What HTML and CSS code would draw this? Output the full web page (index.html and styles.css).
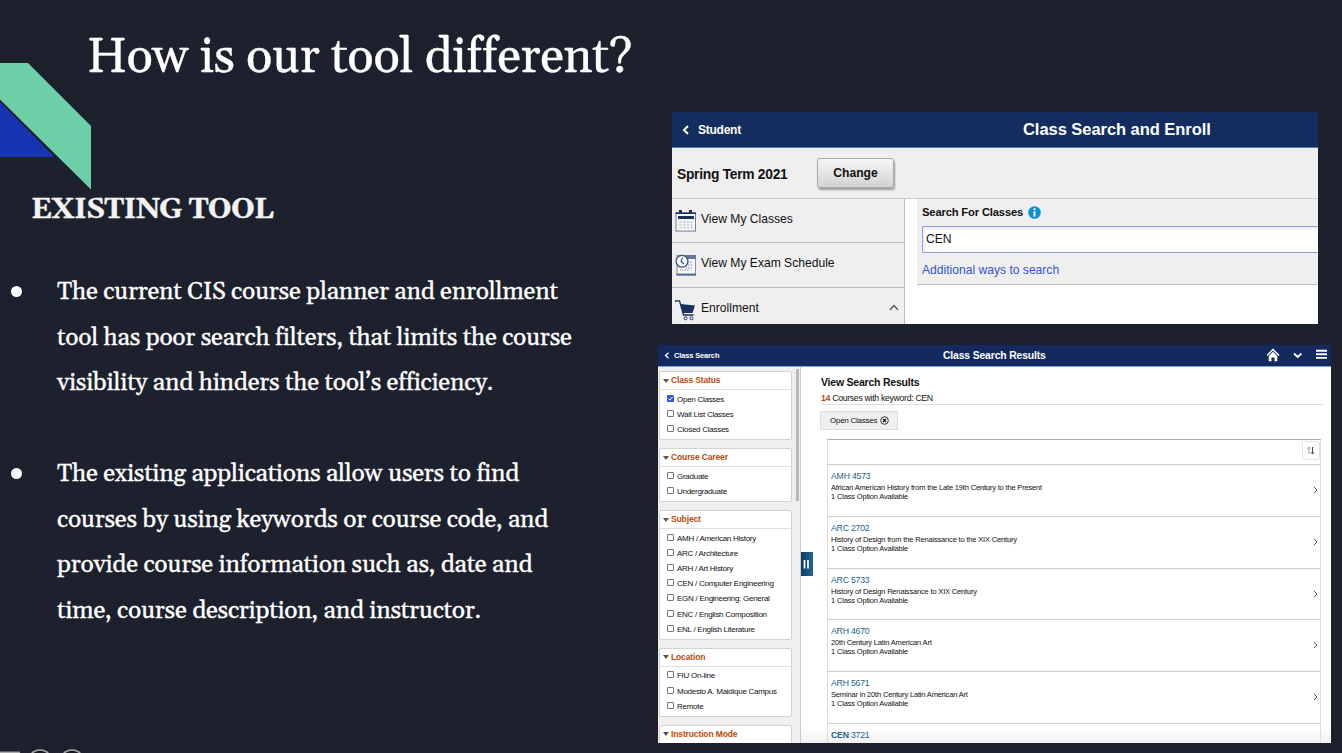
FILE: index.html
```html
<!DOCTYPE html>
<html lang="en">
<head>
<meta charset="utf-8">
<title>How is our tool different?</title>
<link rel="stylesheet" href="styles.css">
</head>
<body>
<main class="slide">
  <svg class="ribbon" width="92" height="128" viewBox="0 0 92 128">
    <path d="M0 0H28L91 63V126.500L0 36.500Z" fill="#6ccfa8"/>
    <path d="M0 39L54.500 94H0Z" fill="#1735b0"/>
  </svg>
  <svg class="controls" width="90" height="4" viewBox="0 0 90 4">
    <path d="M0 3.300H20" stroke="#aaa" stroke-width="1.500"/>
    <circle cx="40" cy="13" r="12" fill="#1b1b20" stroke="#aaa" stroke-width="1.600"/>
    <circle cx="72" cy="13" r="12" fill="#1b1b20" stroke="#aaa" stroke-width="1.600"/>
  </svg>

  <section class="copy">
    <h1>How is our tool different?</h1>
    <h2>EXISTING TOOL</h2>
    <ul class="points">
      <li><i class="dot"></i><p>The current CIS course planner and enrollment<br>tool has poor search filters, that limits the course<br>visibility and hinders the tool’s efficiency.</p></li>
      <li><i class="dot"></i><p>The existing applications allow users to find<br>courses by using keywords or course code, and<br>provide course information such as, date and<br>time, course description, and instructor.</p></li>
    </ul>
  </section>

  <section class="shots">
    <div class="enroll">
      <header class="enroll-head">
        <svg width="8" height="10" viewBox="0 0 8 10"><path d="M6 1L2 5L6 9" fill="none" stroke="#fff" stroke-width="2"/></svg>
        <span class="back">Student</span>
        <span class="enroll-title">Class Search and Enroll</span>
      </header>
      <div class="term"><span class="term-name">Spring Term 2021</span><span class="change">Change</span></div>
      <div class="enroll-body">
        <nav class="menu">
          <div class="menu-row">
            <svg width="22" height="22" viewBox="0 0 22 22"><rect x="1" y="3" width="19.500" height="18" fill="#fff" stroke="#6b7b98"/><path d="M.5 2.500H21V4H.5Z" fill="#17305d"/><path d="M3 6H19V9H3Z" fill="#17305d"/><path d="M5.500 0V3M15.500 0V3" stroke="#17305d" stroke-width="3"/><path d="M3 12H19M3 15H19M3 18H19M6 10V19M9.500 10V19M13 10V19M16.500 10V19" stroke="#c4c9d2" stroke-width=".8"/></svg>
            <span>View My Classes</span>
          </div>
          <div class="menu-row">
            <svg width="22" height="22" viewBox="0 0 22 22"><rect x="2" y="1.500" width="18.500" height="19.500" fill="#f6f7f9" stroke="#8090aa"/><path d="M10 1H21V5H10Z" fill="#607799"/><path d="M1.500 20.500H21" stroke="#4c658e" stroke-width="1.800"/><path d="M13 8H18M13 11H18M11 14H17M5 16H15" stroke="#71819b" stroke-dasharray="1.200 1.200"/><circle cx="7" cy="7.300" r="5.900" fill="#f8fafc" stroke="#39557f" stroke-width="1.300"/><path d="M7.500 3.500L6 7.500L9 10" fill="none" stroke="#39557f" stroke-width="1.100"/></svg>
            <span>View My Exam Schedule</span>
          </div>
          <div class="menu-row">
            <svg width="22" height="22" viewBox="0 0 22 22"><path d="M.7 3V1.800H4.500L8.500 16H18.500" fill="none" stroke="#17305d" stroke-width="1.300"/><path d="M5.500 5L20 6.500L17.500 14H8Z" fill="#17305d"/><circle cx="10.500" cy="19.300" r="1.500" fill="#fff" stroke="#17305d"/><circle cx="16.500" cy="19.300" r="1.500" fill="#fff" stroke="#17305d"/></svg>
            <span>Enrollment</span>
            <svg class="caret" width="10" height="7" viewBox="0 0 10 7"><path d="M1 6L5 1.500L9 6" fill="none" stroke="#555" stroke-width="1.300"/></svg>
          </div>
        </nav>
        <div class="search">
          <div class="search-label"><span>Search For Classes</span><svg width="13" height="13" viewBox="0 0 13 13"><circle cx="6.500" cy="6.500" r="6.300" fill="#0a8fd6"/><path d="M6.500 2.300V4M6.500 5.200V10.500" stroke="#fff" stroke-width="2"/></svg></div>
          <div class="field">CEN</div>
          <div class="ways">Additional ways to search</div>
        </div>
      </div>
    </div>

    <div class="results">
      <header class="res-head">
        <svg width="6" height="7" viewBox="0 0 6 7"><path d="M4.500 .8L1.500 3.500L4.500 6.200" fill="none" stroke="#fff" stroke-width="1.300"/></svg>
        <span class="res-back">Class Search</span>
        <span class="res-title">Class Search Results</span>
        <svg width="61" height="14" viewBox="0 0 61 14">
          <path d="M0 7.500L6 1.500L12 7.500" fill="none" stroke="#fff" stroke-width="1.500"/><path d="M1.700 8L6 3.800L10.300 8V13.200H7.500V9.500H4.500V13.200H1.700Z" fill="#fff"/>
          <path d="M27 5.500L30.700 9L34.400 5.500" fill="none" stroke="#fff" stroke-width="1.900"/>
          <path d="M49 2.700H60M49 6.300H60M49 9.900H60" stroke="#fff" stroke-width="1.900"/>
        </svg>
      </header>
      <div class="res-body">
        <aside class="filters">
          <div class="cards">
            <div class="card"><h3>Class Status</h3><div class="opts"><span class="opt on"><svg width="7" height="7" viewBox="0 0 7 7"><rect width="7" height="7" rx="1" fill="#2858e0"/><path d="M1.500 3.600L3 5.200L5.600 1.700" fill="none" stroke="#fff"/></svg>Open Classes</span><span class="opt">Wait List Classes</span><span class="opt">Closed Classes</span></div></div>
            <div class="card"><h3>Course Career</h3><div class="opts"><span class="opt">Graduate</span><span class="opt">Undergraduate</span></div></div>
            <div class="card"><h3>Subject</h3><div class="opts"><span class="opt">AMH / American History</span><span class="opt">ARC / Architecture</span><span class="opt">ARH / Art History</span><span class="opt">CEN / Computer Engineering</span><span class="opt">EGN / Engineering: General</span><span class="opt">ENC / English Composition</span><span class="opt">ENL / English Literature</span></div></div>
            <div class="card"><h3>Location</h3><div class="opts"><span class="opt">FIU On-line</span><span class="opt">Modesto A. Maidique Campus</span><span class="opt">Remote</span></div></div>
            <div class="card"><h3>Instruction Mode</h3><div class="opts"><span class="opt"></span></div></div>
          </div>
          <i class="scroll"></i>
        </aside>
        <svg class="handle" width="12" height="24" viewBox="0 0 12 24"><defs><linearGradient id="hg"><stop offset="0" stop-color="#0c3b5e"/><stop offset="1" stop-color="#1f6796"/></linearGradient></defs><path d="M0 0H12V24H0Z" fill="url(#hg)"/><path d="M3.500 8V16.500M7 8V16.500" stroke="#fff" stroke-width="1.700"/></svg>
        <div class="list-area">
          <h4>View Search Results</h4>
          <div class="count"><b>14</b> Courses with keyword: CEN</div>
          <div class="chip">Open Classes<svg width="9" height="9" viewBox="0 0 9 9"><circle cx="4.500" cy="4.500" r="3.800" fill="none" stroke="#222" stroke-width=".9"/><path d="M3 3L6 6M6 3L3 6" stroke="#111" stroke-width="1.100"/></svg></div>
          <div class="table">
            <div class="tools"><span class="sort"><svg width="10" height="9" viewBox="0 0 10 9"><path d="M3 8V1.500M1 3L3 1L4.500 2.500" fill="none" stroke="#999" stroke-width=".9"/><path d="M6.500 1V8M4.800 6.200L6.500 8L8.200 6.200" fill="none" stroke="#444"/></svg></span></div>
            <div class="course"><div><a>AMH 4573</a><p>African American History from the Late 19th <em>Century</em> to the Present<br>1 Class Option Available</p></div><svg class="go" width="5" height="8" viewBox="0 0 5 8"><path d="M1 1L4 4L1 7" fill="none" stroke="#555"/></svg></div>
            <div class="course"><div><a>ARC 2702</a><p>History of Design from the Renaissance to the XIX <em>Century</em><br>1 Class Option Available</p></div><svg class="go" width="5" height="8" viewBox="0 0 5 8"><path d="M1 1L4 4L1 7" fill="none" stroke="#555"/></svg></div>
            <div class="course"><div><a>ARC 5733</a><p>History of Design Renaissance to XIX <em>Century</em><br>1 Class Option Available</p></div><svg class="go" width="5" height="8" viewBox="0 0 5 8"><path d="M1 1L4 4L1 7" fill="none" stroke="#555"/></svg></div>
            <div class="course"><div><a>ARH 4670</a><p>20th <em>Century</em> Latin American Art<br>1 Class Option Available</p></div><svg class="go" width="5" height="8" viewBox="0 0 5 8"><path d="M1 1L4 4L1 7" fill="none" stroke="#555"/></svg></div>
            <div class="course"><div><a>ARH 5671</a><p>Seminar in 20th <em>Century</em> Latin American Art<br>1 Class Option Available</p></div><svg class="go" width="5" height="8" viewBox="0 0 5 8"><path d="M1 1L4 4L1 7" fill="none" stroke="#555"/></svg></div>
            <div class="course"><div><a><b>CEN</b> 3721</a></div></div>
          </div>
        </div>
      </div>
    </div>
  </section>
</main>
</body>
</html>
```
FILE: styles.css
```css
*, *::before { box-sizing: border-box; }
body { margin: 0; background: #1d212d; }
h1, h2, h3, h4, p, ul { margin: 0; padding: 0; }
svg { display: block; flex: none; }

.slide {
  position: relative;
  width: 1342px;
  height: 753px;
  overflow: hidden;
  display: grid;
  grid-template-columns: 658px 673px;
  background: #1d212d;
  font-family: "Liberation Sans", Arial, sans-serif;
}
.ribbon { position: absolute; left: 0; top: 63px; }
.controls { position: absolute; left: 0; bottom: 0; }

.copy { font-family: Gelasio, Georgia, "Liberation Serif", serif; color: #fff; }
h1 {
  padding: 28px 0 0 87px;
  font-size: 49px;
  line-height: 60px;
  font-weight: 400;
  letter-spacing: -.39px;
  white-space: nowrap;
  -webkit-text-stroke: .3px #fff;
}
h2 {
  padding: 104px 0 0 31px;
  font-size: 29px;
  line-height: 36px;
  letter-spacing: -.7px;
  color: #f3f3f3;
  -webkit-text-stroke: .4px #f3f3f3;
}
.points { list-style: none; padding: 41px 0 0 10px; display: flex; flex-direction: column; gap: 45.500px; }
.points li { display: flex; gap: 35px; }
.dot { flex: none; width: 11px; height: 11px; margin: 17px 0 0 1px; border-radius: 50%; background: #fff; }
.points p {
  font-size: 24.600px;
  line-height: 45.600px;
  letter-spacing: -.29px;
  white-space: nowrap;
  -webkit-text-stroke: .3px #fff;
}

.shots { display: flex; flex-direction: column; gap: 21px; padding-top: 112px; }

.enroll {
  width: 646px;
  height: 212px;
  margin-left: 14px;
  background: #fff;
  color: #111;
  overflow: hidden;
  display: flex;
  flex-direction: column;
  font-size: 12.100px;
}
.enroll-head {
  display: flex;
  align-items: center;
  flex: none;
  height: 36px;
  padding-left: 10px;
  background: #132e5e;
  border-bottom: 1px solid #587bb0;
  color: #fff;
  font-weight: 700;
}
.back { width: 333px; padding-left: 8px; font-size: 12px; letter-spacing: -.25px; }
.enroll-title { font-size: 16.500px; letter-spacing: -.05px; }
.term {
  flex: none;
  display: flex;
  align-items: center;
  height: 51px;
  padding-left: 5px;
  background: #efefef;
  border-bottom: 1px solid #ccc;
  font-weight: 700;
}
.term-name { width: 140px; font-size: 13.800px; letter-spacing: -.27px; padding-top: 2px; }
.change {
  width: 77px;
  height: 30px;
  line-height: 29px;
  text-align: center;
  border: 1px solid #aaa;
  border-radius: 3px;
  background: linear-gradient(#f6f6f6, #d2d2d2);
  box-shadow: 1px 2px 2px rgba(0, 0, 0, .35);
}
.enroll-body { flex: 1; display: grid; grid-template-columns: 233px 1fr; min-height: 0; }
.menu { background: #efefef; border-right: 1px solid #bbb; }
.menu-row {
  display: flex;
  height: 44.400px;
  padding: 11px 5px 0 3px;
  gap: 4px;
  border-bottom: 1px solid #bbb;
}
.menu-row span { flex: 1; line-height: 19.500px; }
.caret { margin-top: 5px; }
.search { height: 86px; margin-left: 12px; padding-left: 5px; background: #efefef; border-bottom: 1px solid #bbb; }
.search-label { display: flex; align-items: center; gap: 5px; height: 27px; padding-bottom: 1px; font-weight: 700; font-size: 11.200px; letter-spacing: -.15px; }
.field {
  height: 27px;
  line-height: 25px;
  padding-left: 3px;
  border: 1px solid #8f9fdd;
  border-right: 0;
  border-radius: 2px 0 0 2px;
  background: #fff;
  box-shadow: inset 2px 2px 3px rgba(0, 0, 0, .08);
}
.ways { line-height: 34px; color: #3554cf; }

.results { width: 673px; height: 398px; overflow: hidden; background: #fff; color: #111; display: flex; flex-direction: column; }
.res-head {
  flex: none;
  display: flex;
  align-items: center;
  height: 22px;
  padding: 0 3px 1px 6px;
  background: #142a5e;
  border-bottom: 1px solid #79ace0;
  color: #fff;
  font-weight: 700;
}
.res-back { width: 273px; padding-left: 4px; font-size: 7.500px; letter-spacing: -.15px; }
.res-title { flex: 1; font-size: 10.400px; letter-spacing: -.15px; }
.res-body { flex: 1; min-height: 0; position: relative; display: grid; grid-template-columns: 143px 1fr; }
.filters {
  display: flex;
  gap: 4px;
  padding: 4px 0 0 1px;
  background: #efefef;
  border-right: 1px solid #ccc;
  overflow: hidden;
}
.cards { width: 133px; display: flex; flex-direction: column; gap: 7.700px; }
.card { flex: none; padding-bottom: 2.300px; background: #fff; border: 1px solid #d2d2d2; border-radius: 2px; }
.card h3 {
  display: flex;
  align-items: center;
  gap: 2px;
  height: 18.200px;
  padding: 0 0 1px 3px;
  border-bottom: 1px solid #ddd;
  font-size: 8.500px;
  letter-spacing: -.13px;
  color: #bb4a0b;
}
.card h3::before { content: ""; border: 3px solid transparent; border-top: 4px solid #555; border-bottom: 0; margin-top: 1px; }
.opts { padding-top: 1.500px; }
.opt { display: flex; align-items: center; gap: 3px; height: 15.150px; padding-left: 7px; font-size: 8px; letter-spacing: -.27px; white-space: nowrap; }
.opt::before {
  content: "";
  width: 7px;
  height: 7px;
  margin-top: -2px;
  border: 1px solid #777;
  border-radius: 1px;
  background: #fff;
}
.opt.on::before { display: none; }
.opt svg { margin-top: -2px; }
.scroll { width: 3px; height: 132px; margin-top: -2px; background: #b8b8b8; }
.handle { position: absolute; left: 143px; top: 184.500px; }

.list-area { padding: 7px 7px 0 20px; background: linear-gradient(#fff 360px, #f1f1f1); overflow: hidden; }
h4 { font-size: 10.500px; letter-spacing: -.22px; line-height: 16px; margin-bottom: 1px; }
.count { height: 14px; line-height: 15px; font-size: 8.700px; letter-spacing: -.3px; border-bottom: 1px solid #ddd; }
.count b { color: #bb4a0b; }
.chip {
  display: flex;
  align-items: center;
  gap: 3px;
  width: 78px;
  height: 19px;
  margin: 6px 0 9px -1px;
  padding-left: 9px;
  border: 1px solid #ddd;
  background: #efefef;
  font-size: 8px;
  letter-spacing: -.25px;
  white-space: nowrap;
}
.table { margin: 0 3px 0 6px; border: 1px solid #ddd; border-top-color: #aaa; }
.tools { display: flex; justify-content: flex-end; height: 25px; padding: 1px 0 0; border-bottom: 1px solid #ccc; }
.sort { display: grid; place-items: center; width: 18px; height: 19px; border: 1px solid #e2e2e2; border-radius: 2px; }
.course { display: flex; justify-content: space-between; height: 51.800px; padding: 5px 2px 0 3px; border-bottom: 1px solid #ccc; }
.course a { display: block; font-size: 8.700px; letter-spacing: -.2px; line-height: 13px; color: #1b5f8c; }
.course p { font-size: 7.500px; letter-spacing: -.17px; line-height: 9px; white-space: nowrap; }
.course em { font-style: normal; color: #555; -webkit-text-stroke: .25px #555; }
.go { margin-top: 16px; }
```
